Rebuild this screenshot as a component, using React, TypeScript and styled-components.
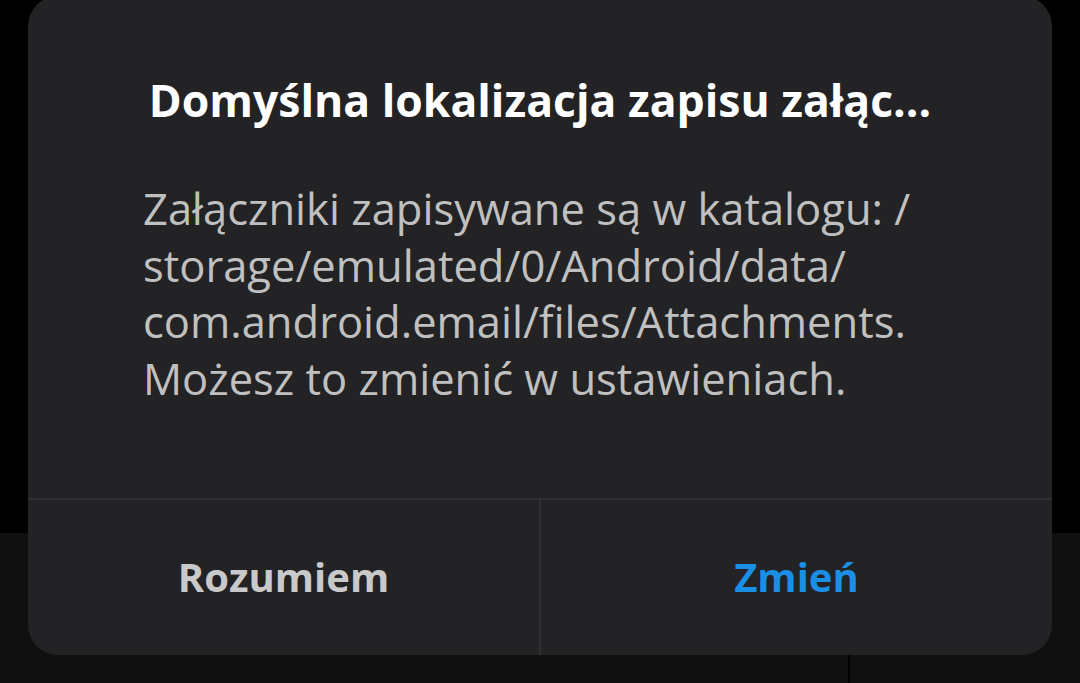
import React from 'react';
import styled, { createGlobalStyle } from 'styled-components';

const Global = createGlobalStyle`
  html, body {
    margin: 0;
    padding: 0;
    background: #000000;
  }
  body {
    font-family: "Open Sans", "Noto Sans", sans-serif;
  }
`;

const Screen = styled.div`
  position: relative;
  width: 1080px;
  height: 683px;
  overflow: hidden;
  display: grid;
  grid-template-rows: 533px 1fr;
  background: #000000;
`;

const BottomBar = styled.div`
  background: #101010;
  display: grid;
  grid-template-columns: 848px 2px 1fr;
`;

const BarDivider = styled.div`
  grid-column: 2;
  background: #000000;
`;

const Dialog = styled.div`
  position: absolute;
  left: 28px;
  top: -4px;
  width: 1024px;
  height: 659px;
  background: #232325;
  border-radius: 30px;
  display: flex;
  flex-direction: column;
`;

const Content = styled.div`
  flex: 1;
  padding: 0 100px 0 115px;
  display: flex;
  flex-direction: column;
`;

const Title = styled.h1`
  margin: 78px 0 0 -15px;
  font-size: 44.5px;
  font-weight: 700;
  line-height: 52px;
  color: #ffffff;
  text-align: center;
  white-space: nowrap;
`;

const Body = styled.p`
  margin: 55px 0 0;
  font-size: 43.5px;
  line-height: 56.5px;
  color: #c0c0c0;
  font-weight: 400;
`;

const Line = styled.span`
  display: block;
  white-space: nowrap;
`;

const Actions = styled.div`
  height: 155px;
  border-top: 2px solid #303032;
  display: grid;
  grid-template-columns: 1fr 2px 1fr;
`;

const ActionDivider = styled.div`
  background: #303032;
`;

const ActionButton = styled.button<{ $primary?: boolean }>`
  border: none;
  background: transparent;
  font-family: "Open Sans", "Noto Sans", sans-serif;
  font-size: 40px;
  font-weight: 700;
  color: ${(p) => (p.$primary ? '#1b8ee6' : '#c9c9c9')};
  display: flex;
  align-items: center;
  justify-content: center;
  padding: 0 0 2px;
  cursor: pointer;
`;

export default function App() {
  return (
    <>
      <Global />
      <Screen>
        <div />
        <BottomBar>
          <BarDivider />
        </BottomBar>
        <Dialog>
          <Content>
            <Title>Domyślna lokalizacja zapisu załąc...</Title>
            <Body>
              <Line>Załączniki zapisywane są w katalogu: /</Line>
              <Line>storage/emulated/0/Android/data/</Line>
              <Line>com.android.email/files/Attachments.</Line>
              <Line>Możesz to zmienić w ustawieniach.</Line>
            </Body>
          </Content>
          <Actions>
            <ActionButton>Rozumiem</ActionButton>
            <ActionDivider />
            <ActionButton $primary>Zmień</ActionButton>
          </Actions>
        </Dialog>
      </Screen>
    </>
  );
}
